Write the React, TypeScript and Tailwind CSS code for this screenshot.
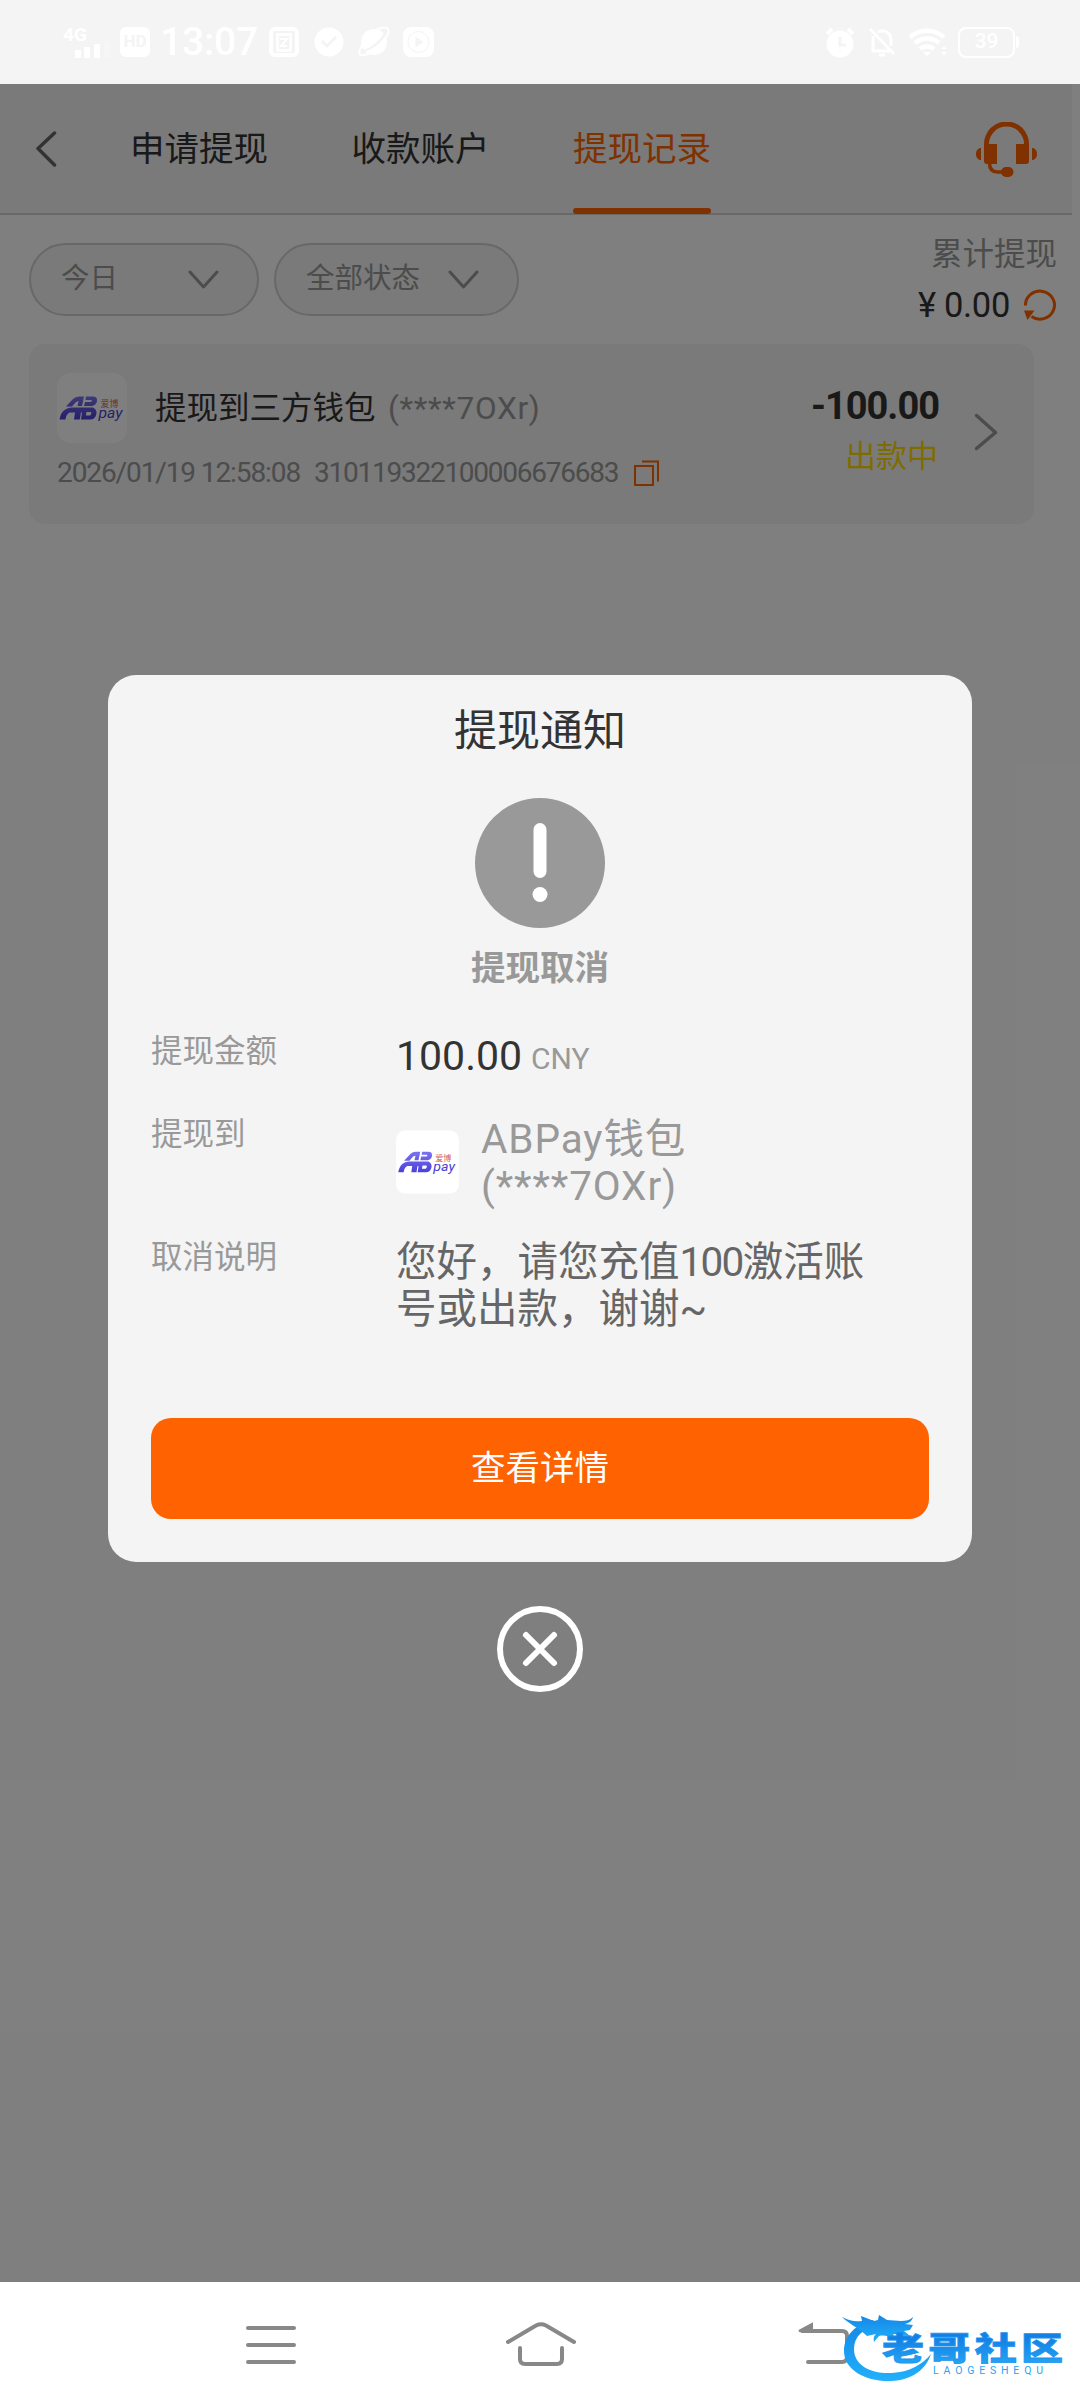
import React from 'react';

const TABS = ['申请提现', '收款账户', '提现记录'];

const StatusBar: React.FC = () => (
  <div className="h-[84px] bg-[#f4f4f4] pt-6 pl-[62px] pr-[61px] flex justify-between text-white">
    <div className="flex h-9 items-center">
      <svg width="48" height="36" viewBox="0 0 48 36" fill="currentColor">
        <text x="1" y="17" fontSize="19" fontWeight="700">4G</text>
        <rect x="13" y="26" width="6" height="8" />
        <rect x="22" y="23" width="6" height="11" />
        <rect x="32" y="20" width="6" height="14" />
        <rect x="42" y="17" width="6" height="17" opacity="0.2" />
      </svg>
      <span className="ml-[10px] w-[30px] h-[30px] rounded-md bg-white text-[#f4f4f4] text-[17px] font-bold flex items-center justify-center">HD</span>
      <span className="ml-[10px] w-[98px] text-[39px] leading-9 font-medium tracking-[-0.2px]">13:07</span>
      <svg className="ml-[11px]" width="30" height="30" viewBox="0 0 30 30" fill="none" stroke="currentColor" strokeWidth="4">
        <rect x="2" y="2" width="26" height="26" rx="4" />
        <rect x="8.500" y="7.500" width="13" height="16" strokeWidth="2.500" />
        <path d="M11 12h7l-6 7h6" strokeWidth="2" />
      </svg>
      <svg className="ml-[15px]" width="30" height="30" viewBox="0 0 30 30">
        <circle cx="15" cy="15" r="14.500" fill="currentColor" />
        <path d="M8 14l5 5 9-9" fill="none" stroke="#f4f4f4" strokeWidth="3" />
      </svg>
      <svg className="ml-[14px]" width="32" height="30" viewBox="0 0 32 30">
        <circle cx="16" cy="15" r="13" fill="currentColor" />
        <path d="M3 24C11 24 24 15 28 4" fill="none" stroke="#f4f4f4" strokeWidth="2.500" />
        <path d="M6 16C1 22 0 27 3 28s10-2 14-5M18 3c6-3 11-3 12-1s0 6-3 10" fill="none" stroke="currentColor" strokeWidth="2" />
      </svg>
      <svg className="ml-[13px]" width="31" height="30" viewBox="0 0 31 30">
        <rect width="31" height="30" rx="8" fill="currentColor" />
        <circle cx="15.500" cy="15" r="10.500" fill="none" stroke="#f4f4f4" strokeWidth="1" />
        <path d="M12.500 9.500l8 5.500-8 5.500z" fill="#f4f4f4" />
      </svg>
    </div>
    <div className="flex h-9 items-center">
      <svg width="30" height="32" viewBox="0 0 30 32">
        <circle cx="15" cy="18" r="13.500" fill="currentColor" />
        <path d="M2 8l5-5M28 8l-5-5" stroke="currentColor" strokeWidth="4" />
        <path d="M15 11v8h6" fill="none" stroke="#f4f4f4" strokeWidth="3" />
      </svg>
      <svg className="ml-[14px]" width="26" height="30" viewBox="0 0 26 30" fill="none" stroke="currentColor" strokeWidth="3">
        <path d="M1 2l24 25M4 9v15h17M9 5c7-3 13 1 13 8v6" />
        <path d="M10 28h6" />
      </svg>
      <svg className="ml-[13px]" width="40" height="30" viewBox="0 0 40 30" fill="none" stroke="currentColor" strokeWidth="4.500">
        <path d="M2 10c10-8.500 24-8.500 34 0M7 16c7-6 17-6 24 0M12 22c4-3.500 10-3.500 14 0" />
        <path d="M15 25h8l-4 4zM33 22l3-3 3 3zM33 25l3 3 3-3z" fill="currentColor" stroke="none" />
      </svg>
      <span className="ml-[10px] w-[57px] h-[31px] rounded-[8px] border-2 border-white text-[21px] flex items-center justify-center font-medium">39</span>
      <span className="w-[3px] h-3 bg-white rounded-r ml-px" />
    </div>
  </div>
);

const HeadsetIcon: React.FC = () => (
  <svg width="62" height="55" viewBox="0 0 62 55" fill="#ff6200">
    <path d="M8 23v-1a22.500 22.500 0 0 1 45 0v1h-5v-1a17.500 17.500 0 0 0-35 0v1z" />
    <path d="M8 22h13v20H11a3 3 0 0 1-3-3zM40 22h13v17a3 3 0 0 1-3 3H40z" />
    <path d="M5 26v12c-3 0-5-2.500-5-6s2-6 5-6zM56 26v12c3 0 5-2.500 5-6s-2-6-5-6z" />
    <path d="M13.500 41c0 6 3 9 8 9h6" fill="none" stroke="#ff6200" strokeWidth="3.500" />
    <rect x="25" y="45" width="12.500" height="10" rx="5" />
  </svg>
);

const Chevron: React.FC<{ className?: string }> = ({ className }) => (
  <svg className={className} width="31" height="20" viewBox="0 0 31 20" fill="none" stroke="#999" strokeWidth="3" strokeLinecap="round" strokeLinejoin="round">
    <path d="M2 2l13.500 15L29 2" />
  </svg>
);

const PayLogo: React.FC<{ className: string }> = ({ className }) => (
  <svg className={`${className} tracking-normal`} viewBox="0 0 70 70">
    <defs>
      <linearGradient id="payFill" gradientUnits="userSpaceOnUse" x1="0" y1="23" x2="0" y2="47">
        <stop offset="0" stopColor="#7d74f0" />
        <stop offset="1" stopColor="#4a3fd8" />
      </linearGradient>
    </defs>
    <rect width="70" height="70" fill="white" />
    <g fill="url(#payFill)">
      <path d="M9 33.500L16 26Q18.500 23.500 22 23.500H27L25 33H20.500L21.700 28Q20 28 18.500 29.500L15 33.500z" />
      <path d="M29 23.500H36Q40.500 23.500 40 28Q39.500 32 35 33H27L28 29H34Q35.500 28 34.500 27H28.500z" />
      <path fillRule="evenodd" d="M2.500 46.500C4 38.500 8 35 15 34.500H36Q40 36.500 39.500 40.500Q38.500 46.500 33 46.500H17L18 39.500H12.500C9.500 41 9 44 8.500 46.500zM29.500 39L28.800 42.500H33Q35 41 34 39z" />
    </g>
    <path d="M24.500 39.500L23.300 47" stroke="white" strokeWidth="1.200" />
    <text x="41.500" y="44.500" fontSize="14.500" fontStyle="italic" fontWeight="400" fill="#4a3fd8" textLength="24" lengthAdjust="spacingAndGlyphs">pay</text>
    <text x="43.500" y="33.500" fontSize="9" fill="#d0665c" textLength="18">爱博</text>
  </svg>
);

const Header: React.FC = () => (
  <div className="w-[1072px] h-[131px] bg-[#f4f4f4] border-b-2 border-[#d2d2d2] flex pl-[35px] pr-[34px]">
    <svg className="mt-[47px]" width="22" height="36" viewBox="0 0 22 36" fill="none" stroke="#666" strokeWidth="3.500" strokeLinecap="round" strokeLinejoin="round">
      <path d="M19.500 2L3 17.500 19.500 34" />
    </svg>
    <div className="ml-[73px] flex gap-[83.5px]">
      {TABS.map((tab, i) => (
        <div key={tab} className={`h-[130px] w-[138px] flex flex-col justify-between text-[34.5px] ${i === 2 ? 'text-[#ff6200]' : 'text-[#333]'}`}>
          <span className="mt-[40px] leading-[50px] whitespace-nowrap">{tab}</span>
          {i === 2 && <span className="h-[6px] rounded-full bg-[#ff6200]" />}
        </div>
      ))}
    </div>
    <div className="ml-auto mt-[38px]">
      <HeadsetIcon />
    </div>
  </div>
);

const Filters: React.FC = () => (
  <div className="h-[129px] flex pl-[29px] pr-[23px]">
    <div className="mt-7 w-[230px] h-[73px] rounded-full border-2 border-[#d0d0d0] bg-[#f4f4f4] flex items-center pl-[30px] pr-[38px] justify-between text-[28.5px] text-[#999]">
      <span>今日</span>
      <Chevron />
    </div>
    <div className="mt-7 ml-[15px] w-[245px] h-[73px] rounded-full border-2 border-[#d0d0d0] bg-[#f4f4f4] flex items-center pl-[30px] pr-[38px] justify-between text-[28.5px] text-[#999]">
      <span>全部状态</span>
      <Chevron />
    </div>
    <div className="ml-auto mt-5 flex flex-col items-end">
      <span className="text-[31.5px] leading-10 text-[#999]">累计提现</span>
      <div className="mt-[10px] flex items-center">
        <span className="text-[34.5px] leading-10 text-[#333] flex">
          <span className="w-[26px]">¥</span>
          <span className="tracking-[-0.3px]">0.00</span>
        </span>
        <svg className="ml-[13px]" width="34" height="32" viewBox="0 0 34 32" fill="none">
          <path d="M2.500 16.500a14.500 14 0 1 1 6 11" stroke="#ff6200" strokeWidth="3" />
          <path d="M1 21.500h10.500L4.500 31z" fill="#ff6200" />
        </svg>
      </div>
    </div>
  </div>
);

const RecordCard: React.FC = () => (
  <div className="ml-[29px] w-[1005px] h-[180px] rounded-[16px] bg-[#f4f4f4] flex pl-[28px] pr-[35px]">
    <div className="pt-[29px]">
      <div className="flex items-center">
        <PayLogo className="w-[70px] h-[70px] rounded-[14px]" />
        <span className="ml-[28px] mt-[2px] w-[222px] text-[31.5px] leading-10 text-[#333] whitespace-nowrap">提现到三方钱包</span>
        <span className="ml-[11px] mt-[2px] text-[31.5px] leading-10 text-[#999] tracking-[0.7px]">(****7OXr)</span>
      </div>
      <div className="mt-[10px] flex items-center text-[28px] leading-10 text-[#999] whitespace-nowrap">
        <span className="w-[257px] tracking-[-1.1px]">2026/01/19 12:58:08</span>
        <span className="w-[304px] tracking-[-1.25px]">310119322100006676683</span>
        <svg className="ml-[16px]" width="26" height="26" viewBox="0 0 26 26" fill="none" stroke="#ff6200" strokeWidth="2">
          <path d="M1 6h18v19H1zM8 1.500h16v20" />
        </svg>
      </div>
    </div>
    <div className="ml-auto flex flex-col items-end pt-[42px]">
      <span className="text-[38px] leading-10 font-bold text-[#333] tracking-[-1px]">-100.00</span>
      <span className="mt-[11px] mr-px text-[31px] leading-10 text-[#ffd900]">出款中</span>
    </div>
    <svg className="ml-[35px] mt-[69px]" width="25" height="38" viewBox="0 0 25 38" fill="none" stroke="#999" strokeWidth="3.500" strokeLinecap="round" strokeLinejoin="round">
      <path d="M2.500 2.500L21.500 19.500 2.500 35.500" />
    </svg>
  </div>
);

const NoticeDialog: React.FC = () => (
  <div className="w-[864px] rounded-[28px] bg-[#f4f4f4] pt-[26px] px-[43px] pb-[43px] flex flex-col">
    <h2 className="text-center text-[43px] leading-[60px] text-[#333]">提现通知</h2>
    <svg className="mt-[37px] self-center" width="130" height="130" viewBox="0 0 130 130">
      <circle cx="65" cy="65" r="65" fill="#999" />
      <rect x="58.500" y="25" width="13" height="55" rx="6.500" fill="white" />
      <circle cx="65" cy="96.500" r="7.500" fill="white" />
    </svg>
    <p className="mt-[15px] text-center text-[34.5px] leading-[50px] font-bold text-[#999]">提现取消</p>

    <div className="mt-[38px] h-[50px] flex items-start">
      <span className="mt-px w-[245px] text-[31.5px] leading-10 text-[#999]">提现金额</span>
      <span className="mt-px text-[41px] leading-[48px] text-[#333]">100.00</span>
      <span className="ml-[9px] mt-[4px] text-[30px] leading-[48px] text-[#999]">CNY</span>
    </div>
    <div className="mt-[34px] h-[94px] flex">
      <span className="w-[245px] text-[31.5px] leading-10 text-[#999]">提现到</span>
      <div className="flex items-center text-[40.5px] leading-[47px] text-[#999] tracking-[0.9px]">
        <PayLogo className="w-[63px] h-[64px] rounded-[10px] mr-[22px]" />
        <span className="mt-px">
          ABPay钱包
          <br />
          (****7OXr)
        </span>
      </div>
    </div>
    <div className="mt-[29px] h-[95px] flex">
      <span className="w-[245px] text-[31.5px] leading-10 text-[#999]">取消说明</span>
      <p className="mt-px text-[40.5px] leading-[47px] text-[#666] whitespace-nowrap">
        您好，请您充值<span className="tracking-[-1.7px]">100</span>激活账
        <br />
        号或出款，谢谢~
      </p>
    </div>

    <button className="mt-[85px] h-[101px] rounded-[20px] bg-[#ff6200] text-white text-[34.5px]">查看详情</button>
  </div>
);

const CommunityLogo: React.FC = () => (
  <svg className="absolute left-[840px] top-[28px]" width="226" height="76" viewBox="0 0 226 76">
    <defs>
      <linearGradient id="dragon" x1="0" y1="0" x2="0" y2="1">
        <stop offset="0" stopColor="#1486e6" />
        <stop offset="1" stopColor="#22b0fb" />
      </linearGradient>
      <linearGradient id="wordmark" x1="0" y1="0" x2="0" y2="1">
        <stop offset="0.200" stopColor="#1480e4" />
        <stop offset="1" stopColor="#27a9f5" />
      </linearGradient>
    </defs>
    <path d="M32 10C12 16 4 28 4 41c0 19 22 31 47 30 22-1 35-12 40-27-9 11-22 18-39 19-22 1-38-8-38-24 0-13 9-21 27-25z" fill="url(#dragon)" />
    <path d="M2 7c8 4 13 5 20 4l-1-5 13 5 4-1 1-5 8 5 14 1c5 0 9-1 12-4-1 4-4 6-8 7l8 1-3 5-6 1 6 5c-7 0-12-2-17-2l2 4c-7-2-11-3-16-2l-5 6c-1-4 0-6 2-8l-9 2C17 17 8 13 2 7z" fill="url(#dragon)" />
    <g transform="translate(42 50) scale(1 0.750)">
      <text x="0" y="0" fontSize="42" fontWeight="900" fill="url(#wordmark)" stroke="#1b93ee" strokeWidth="1" textLength="181">老哥社区</text>
    </g>
    <text x="93" y="64" fontSize="10.500" fill="#2ba4f2" textLength="110">LAOGESHEQU</text>
  </svg>
);

const NavBar: React.FC = () => (
  <div className="relative h-[126px] bg-white flex text-[#888]">
    <svg className="ml-[246px] mt-[44px]" width="50" height="38" viewBox="0 0 50 38" stroke="currentColor" strokeWidth="4" strokeLinecap="round">
      <path d="M2 2h46M2 19h46M2 36h46" />
    </svg>
    <svg className="ml-[210px] mt-[40px]" width="70" height="45" viewBox="0 0 70 45" fill="none" stroke="currentColor" strokeWidth="4" strokeLinecap="round" strokeLinejoin="round">
      <path d="M2 20L30 3.500q5-2.500 10 0L68 20" />
      <path d="M14 26v11q0 5 5 5h32q5 0 5-5V26" />
    </svg>
    <svg className="ml-[222px] mt-[40px]" width="52" height="45" viewBox="0 0 52 45" fill="none" stroke="currentColor" strokeWidth="4" strokeLinecap="round">
      <path d="M4 9h40q5 0 5 5v21q0 5-5 5H10" />
      <path d="M1 9l13-7v7z" fill="currentColor" strokeWidth="2" />
    </svg>
    <CommunityLogo />
  </div>
);

export default function App() {
  return (
    <div className="w-[1080px] h-[2408px] overflow-hidden font-[Roboto,'Noto_Sans_CJK_SC',sans-serif]">
      <StatusBar />
      <div className="relative h-[2198px] bg-white">
        <Header />
        <Filters />
        <RecordCard />
        {/* dimmed backdrop with the notice on top */}
        <div className="absolute inset-0 bg-black/50 flex flex-col items-center pt-[591px]">
          <NoticeDialog />
          <svg className="mt-[44px]" width="86" height="86" viewBox="0 0 86 86" fill="none" stroke="white" strokeWidth="6" strokeLinecap="round">
            <circle cx="43" cy="43" r="40" />
            <path d="M29 29l28 28M57 29L29 57" />
          </svg>
        </div>
      </div>
      <NavBar />
    </div>
  );
}
